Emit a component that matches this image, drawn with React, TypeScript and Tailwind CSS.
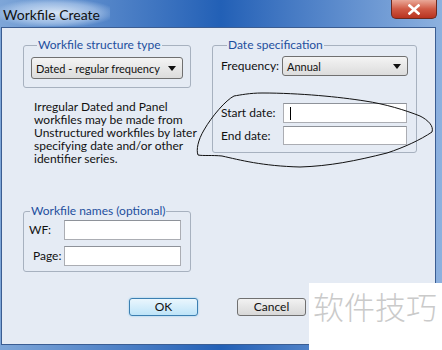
import React from 'react';

const ui = { fontFamily: 'Lato, "Open Sans", sans-serif' };

function Combo({ value, width, height }: { value: string; width: string; height: string }) {
    return (
        <div className={`${width} ${height} flex items-center justify-between rounded-[3px] border border-[#707070] bg-gradient-to-b from-[#f4f4f4] to-[#dcdcdc] pl-[4px] pr-[6px]`}>
            <span className="whitespace-nowrap text-[11px] text-[#111] leading-none">{value}</span>
            <svg width="8" height="5" viewBox="0 0 8 5"><path d="M0 0h8L4 5z" fill="#111" /></svg>
        </div>
    );
}

function Field({ width, height, caret }: { width: string; height: string; caret?: boolean }) {
    return (
        <div className={`${width} ${height} flex items-center border border-[#abadb3] border-t-[#8e9299] bg-white pl-[6px]`}>
            {caret && <div className="w-px h-[13px] bg-black" />}
        </div>
    );
}

function Group({ title, className, children }: { title: string; className: string; children: React.ReactNode }) {
    return (
        <fieldset className={`rounded-[3px] border border-[#a7b1bf] ${className}`}>
            <legend className="ml-[6px] px-[1px] whitespace-nowrap text-[12px] leading-[14px] text-[#1e4f9e]">{title}</legend>
            {children}
        </fieldset>
    );
}

const note = [
    'Irregular Dated and Panel',
    'workfiles may be made from',
    'Unstructured workfiles by later',
    'specifying date and/or other',
    'identifier series.',
];

export default function App() {
    return (
        <div className="relative w-[442px] h-[350px] overflow-hidden bg-gradient-to-r from-[#7ea6d8] via-[#2260b6] to-[#8db1df]" style={ui}>
            {/* title bar */}
            <div className="relative h-[27px] flex items-start">
                <div className="absolute left-0 top-0 w-[110px] h-[26px] bg-[radial-gradient(ellipse_at_center,rgba(235,243,252,0.85)_0%,rgba(200,220,245,0.5)_55%,rgba(200,220,245,0)_80%)]" />
                <span className="relative ml-[3px] mt-[4px] text-[14px] text-[#111]">Workfile Create</span>
                <div className="ml-auto mr-[5px] w-[46px] h-[19px] flex items-center justify-center rounded-b-[5px] border border-t-0 border-[#6b2a20] bg-gradient-to-b from-[#e9a898] via-[#d05a45] to-[#b8321f]">
                    <svg width="12" height="11" viewBox="0 0 12 11">
                        <path d="M1.5 1.5l9 8M10.5 1.5l-9 8" stroke="#fff" strokeWidth="2.6" strokeLinecap="square" />
                    </svg>
                </div>
            </div>

            {/* client area */}
            <div className="ml-[1px] w-[435px] h-[318px] border border-[#3b5d92] bg-[#e5ebf4]">
                <div className="flex pl-[21px] pt-[10px]">
                    <div className="w-[168px] flex flex-col">
                        <Group title="Workfile structure type" className="pl-[7px] pb-[8px]">
                            <div className="mt-[5px]">
                                <Combo value="Dated - regular frequency" width="w-[152px]" height="h-[22px]" />
                            </div>
                        </Group>
                        <div className="mt-[12px] pl-[11px] flex flex-col">
                            {note.map((line) => (
                                <span key={line} className="whitespace-nowrap text-[12px] leading-[13px] text-[#111]">{line}</span>
                            ))}
                        </div>
                        <Group title="Workfile names (optional)" className="mt-[39px] pb-[5px]">
                            <div className="mt-[2px] flex items-center">
                                <span className="ml-[5px] w-[35px] text-[12px] text-[#111]">WF:</span>
                                <Field width="w-[117px]" height="h-[20px]" />
                            </div>
                            <div className="mt-[6px] flex items-center">
                                <span className="ml-[9px] w-[31px] text-[12px] text-[#111]">Page:</span>
                                <Field width="w-[117px]" height="h-[20px]" />
                            </div>
                        </Group>
                    </div>

                    <div className="ml-[21px] w-[205px]">
                        <Group title="Date specification" className="pl-[8px] pr-[8px] pb-[7px]">
                            <div className="mt-[4px] flex items-center">
                                <span className="w-[61px] text-[12px] text-[#111]">Frequency:</span>
                                <Combo value="Annual" width="w-[126px]" height="h-[20px]" />
                            </div>
                            <div className="mt-[27px] flex items-center">
                                <span className="w-[62px] text-[12px] text-[#111]">Start date:</span>
                                <Field width="w-[124px]" height="h-[20px]" caret />
                            </div>
                            <div className="mt-[3px] flex items-center">
                                <span className="w-[62px] text-[12px] text-[#111]">End date:</span>
                                <Field width="w-[124px]" height="h-[19px]" />
                            </div>
                        </Group>
                    </div>
                </div>

                <div className="mt-[26px] flex pl-[127px] gap-[39px]">
                    <button className="w-[69px] h-[18px] rounded-[3px] border border-[#3c7fb1] bg-gradient-to-b from-[#eaf6fd] to-[#bee4f8] shadow-[0_0_2px_#7dc4ec] text-[12px] leading-none text-[#111]">
                        OK
                    </button>
                    <button className="w-[69px] h-[18px] rounded-[3px] border border-[#707070] bg-gradient-to-b from-[#f2f2f2] to-[#d8d8d8] text-[12px] leading-none text-[#111]">
                        Cancel
                    </button>
                </div>
            </div>

            {/* hand-drawn ellipse */}
            <svg className="absolute left-0 top-0 pointer-events-none" width="442" height="350" viewBox="0 0 442 350">
                <path
                    d="M234 96 C 226 100, 212 116, 204 130 C 198 140, 196 150, 198 155 C 203 156, 212 155, 222 156 C 240 160, 262 166, 300 167 C 330 166, 355 161, 387 153 C 405 147, 420 140, 432 132 C 434 126, 428 120, 420 116 C 405 110, 385 104, 365 101 C 340 97, 300 93, 262 93 C 250 93, 240 95, 234 96"
                    fill="none"
                    stroke="#111"
                    strokeWidth="1"
                />
            </svg>

            {/* watermark */}
            <div className="absolute left-[309px] top-[283px] w-[133px] h-[67px] bg-white flex items-start pl-[4px] pt-[4px]">
                <span className="text-[31px] leading-[38px] text-[#cacaca]" style={{ fontFamily: '"Noto Sans CJK SC", sans-serif', fontWeight: 300 }}>
                    软件技巧
                </span>
            </div>
        </div>
    );
}
